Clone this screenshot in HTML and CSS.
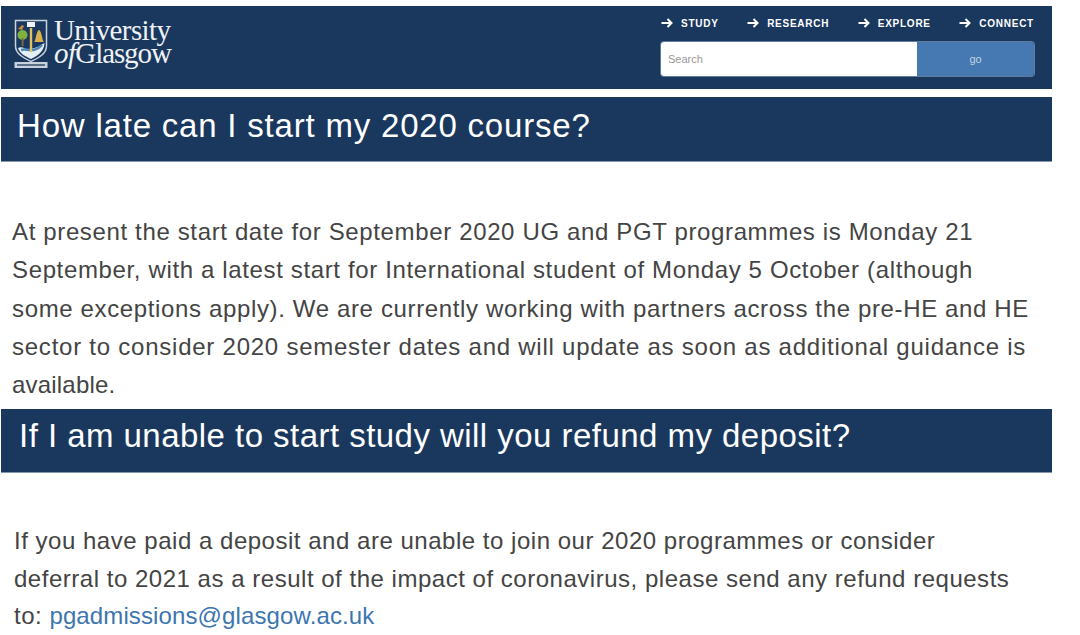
FILE: index.html
```html
<!DOCTYPE html>
<html lang="en">
<head>
<meta charset="utf-8">
<title>University of Glasgow</title>
<link rel="stylesheet" href="styles.css">
</head>
<body>
<header class="site-header">
  <div class="brand">
    <svg class="crest" width="34" height="50" viewBox="0 0 34 50">
      <path d="M1.500 1.500H32.500V27C32.500 35 24 39 17 42.500C10 39 1.500 35 1.500 27Z" fill="#1a3860" stroke="#c9d2dc" stroke-width="1.500"/>
      <path d="M4 29C9 26 12 32 17 30C22 29 26 27 30.500 24C30 33 23 37 17 40C11 37 6 35 4 29Z" fill="#e4eef5"/>
      <path d="M7 31C13 29 20 35 28 26" fill="none" stroke="#4a86b8" stroke-width="2.500"/>
      <circle cx="8.500" cy="16" r="5" fill="#7fb13f"/>
      <rect x="7.700" y="19" width="1.800" height="8" fill="#8a6a3a"/>
      <rect x="15.800" y="9" width="2.400" height="24" fill="#e2c25a"/>
      <path d="M20 23C22 22 22 12 25 11C28 12 28 22 30 23Z" fill="#d9b04e"/>
      <rect x="13" y="3" width="8" height="5" fill="#eef2f5"/>
      <path d="M4 10L8 6L10 7L8 11Z" fill="#c98a3a"/>
      <rect x="0.500" y="43" width="33" height="6" fill="#c9d2dc"/>
      <rect x="3" y="45" width="28" height="2" fill="#5a6f88"/>
    </svg>
    <div class="wordmark">
      <span class="word-top">University</span>
      <span class="word-bottom"><i>of</i><span class="word-glasgow">Glasgow</span></span>
    </div>
  </div>
  <div class="tools">
    <nav class="nav">
      <a class="nav-item"><svg class="arrow" width="12" height="10" viewBox="0 0 12 10"><path d="M0.500 5H10M6.500 1L10.500 5L6.500 9" fill="none" stroke="#fff" stroke-width="2"/></svg>STUDY</a>
      <a class="nav-item"><svg class="arrow" width="12" height="10" viewBox="0 0 12 10"><path d="M0.500 5H10M6.500 1L10.500 5L6.500 9" fill="none" stroke="#fff" stroke-width="2"/></svg>RESEARCH</a>
      <a class="nav-item"><svg class="arrow" width="12" height="10" viewBox="0 0 12 10"><path d="M0.500 5H10M6.500 1L10.500 5L6.500 9" fill="none" stroke="#fff" stroke-width="2"/></svg>EXPLORE</a>
      <a class="nav-item"><svg class="arrow" width="12" height="10" viewBox="0 0 12 10"><path d="M0.500 5H10M6.500 1L10.500 5L6.500 9" fill="none" stroke="#fff" stroke-width="2"/></svg>CONNECT</a>
    </nav>
    <div class="search">
      <span class="search-input">Search</span>
      <span class="search-go">go</span>
    </div>
  </div>
</header>
<section class="band band-first"><h1 class="band-title">How late can I start my 2020 course?</h1></section>
<p class="copy copy-first">At present the start date for September 2020 UG and PGT programmes is Monday 21<br>September, with a latest start for International student of Monday 5 October (although<br>some exceptions apply). We are currently working with partners across the pre-HE and HE<br><span class="line-wide">sector to consider 2020 semester dates and will update as soon as additional guidance is</span><br><span class="line-tight">available.</span></p>
<section class="band band-second"><h1 class="band-title band-title-second">If I am unable to start study will you refund my deposit?</h1></section>
<p class="copy copy-second">If you have paid a deposit and are unable to join our 2020 programmes or consider<br>deferral to 2021 as a result of the impact of coronavirus, please send any refund requests<br>to: <a class="mail">pgadmissions@glasgow.ac.uk</a></p>
</body>
</html>
```
FILE: styles.css
```css
html, body {
  margin: 0;
  padding: 0;
  background: #fff;
  overflow: hidden;
}
body {
  width: 1080px;
  height: 635px;
  padding-top: 6px;
  box-sizing: border-box;
  font-family: "Liberation Sans", Arial, sans-serif;
}
.site-header {
  width: 1051px;
  height: 83px;
  margin-left: 1px;
  background: #1a385e;
  display: flex;
  justify-content: space-between;
  box-sizing: border-box;
  padding: 12px 18px 0 13px;
}
.brand {
  display: flex;
  gap: 6px;
  align-items: flex-start;
}
.crest {
  margin-top: 1px;
}
.wordmark {
  display: flex;
  flex-direction: column;
  font-family: "Liberation Serif", serif;
  color: #eef2f5;
  font-size: 29px;
  line-height: 23px;
  letter-spacing: -0.6px;
  margin-top: 1px;
}
.word-glasgow {
  letter-spacing: -1.1px;
}
.tools {
  width: 373px;
  display: flex;
  flex-direction: column;
}
.nav {
  display: flex;
  justify-content: space-between;
  height: 12px;
  margin-top: -1px;
}
.nav-item {
  display: flex;
  align-items: center;
  gap: 8px;
  color: #fff;
  font-size: 10px;
  font-weight: 700;
  letter-spacing: 0.75px;
}
.search {
  display: flex;
  height: 34px;
  margin-top: 13px;
  border-radius: 3px;
  overflow: hidden;
  box-shadow: 0 0 0 1px #5f7b9d;
}
.search-input {
  width: 256px;
  background: #fff;
  color: #999;
  font-size: 11px;
  line-height: 34px;
  padding-left: 7px;
  box-sizing: border-box;
}
.search-go {
  flex: 1;
  background: #4679b1;
  color: #c3d3e4;
  font-size: 11px;
  line-height: 34px;
  text-align: center;
}
.band {
  width: 1051px;
  margin-left: 1px;
  background: #1a385e;
  border-bottom: 1px solid #8497af;
  box-sizing: border-box;
  display: flex;
  align-items: center;
}
.band-first {
  height: 65px;
  margin-top: 8px;
  padding: 0 0 6px 16px;
}
.band-second {
  height: 64px;
  padding: 0 0 10px 18px;
}
.band-title {
  margin: 0;
  color: #fff;
  font-size: 33px;
  font-weight: 400;
  letter-spacing: 0.8px;
  white-space: nowrap;
}
.band-title-second {
  letter-spacing: 0.46px;
}
.copy {
  margin: 0;
  color: #444;
  font-size: 24px;
  line-height: 38.300px;
  white-space: nowrap;
  letter-spacing: 0.64px;
}
.line-wide {
  letter-spacing: 0.76px;
}
.line-tight {
  letter-spacing: 0.2px;
}
.copy-first {
  padding: 51px 0 5px 12px;
}
.copy-second {
  padding: 49px 0 0 14px;
  line-height: 37.500px;
  letter-spacing: 0.52px;
}
.mail {
  color: #3d76ae;
  letter-spacing: 0.12px;
}
```
